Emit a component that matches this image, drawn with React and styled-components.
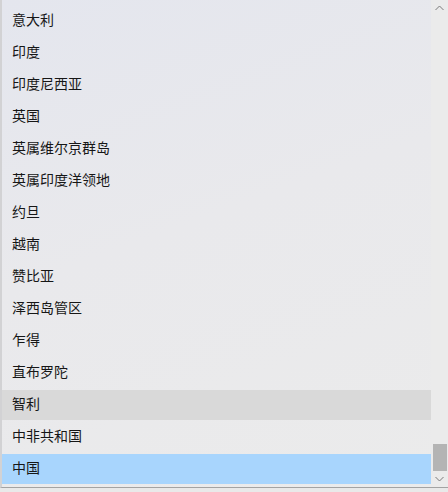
import React from "react";
import styled, { createGlobalStyle } from "styled-components";

const GlobalStyle = createGlobalStyle`
  html, body {
    margin: 0;
    padding: 0;
    background: #e9e9e9;
  }
`;

const Frame = styled.div`
  width: 448px;
  height: 488px;
  box-sizing: border-box;
  display: flex;
  border-left: 2px solid #d2d2d4;
  border-bottom: 1px solid #a3a3a3;
  background: linear-gradient(160deg, #e4e6ee 0%, #e9e9ec 45%, #ebebeb 100%);
  font-family: "Noto Sans CJK SC", "Noto Sans", sans-serif;
  overflow: hidden;
`;

const List = styled.ul`
  flex: 1;
  list-style: none;
  margin: 0;
  padding: 6px 0 0;
`;

const Item = styled.li`
  height: 30px;
  line-height: 26px;
  margin-bottom: 2px;
  padding-left: 10px;
  font-size: 14px;
  color: #161616;
  background: ${(p) =>
    p.$selected ? "#a8d5fd" : p.$hover ? "#d9d9d9" : "transparent"};
`;

const ScrollBar = styled.div`
  width: 17px;
  display: flex;
  flex-direction: column;
  background: #ebebeb;
`;

const Arrow = styled.div`
  height: 16px;
  display: flex;
  align-items: center;
  justify-content: center;
`;

const Track = styled.div`
  flex: 1;
  display: flex;
  flex-direction: column;
  justify-content: flex-end;
  align-items: center;
`;

const Thumb = styled.div`
  width: 14px;
  height: 27px;
  background: #b4b4b4;
`;

const Chevron = ({ up }) => (
  <svg width="9" height="6" viewBox="0 0 9 6">
    <path
      d={up ? "M0.5 5 L4.5 1 L8.5 5" : "M0.5 1 L4.5 5 L8.5 1"}
      fill="none"
      stroke="#7a7a7a"
      strokeWidth="1"
    />
  </svg>
);

const countries = [
  "意大利",
  "印度",
  "印度尼西亚",
  "英国",
  "英属维尔京群岛",
  "英属印度洋领地",
  "约旦",
  "越南",
  "赞比亚",
  "泽西岛管区",
  "乍得",
  "直布罗陀",
  "智利",
  "中非共和国",
  "中国",
];

const App = () => {
  return (
    <>
      <GlobalStyle />
      <Frame>
        <List>
          {countries.map((name) => (
            <Item
              key={name}
              $hover={name === "智利"}
              $selected={name === "中国"}
            >
              {name}
            </Item>
          ))}
        </List>
        <ScrollBar>
          <Arrow>
            <Chevron up />
          </Arrow>
          <Track>
            <Thumb />
          </Track>
          <Arrow>
            <Chevron />
          </Arrow>
        </ScrollBar>
      </Frame>
    </>
  );
};

export default App;
